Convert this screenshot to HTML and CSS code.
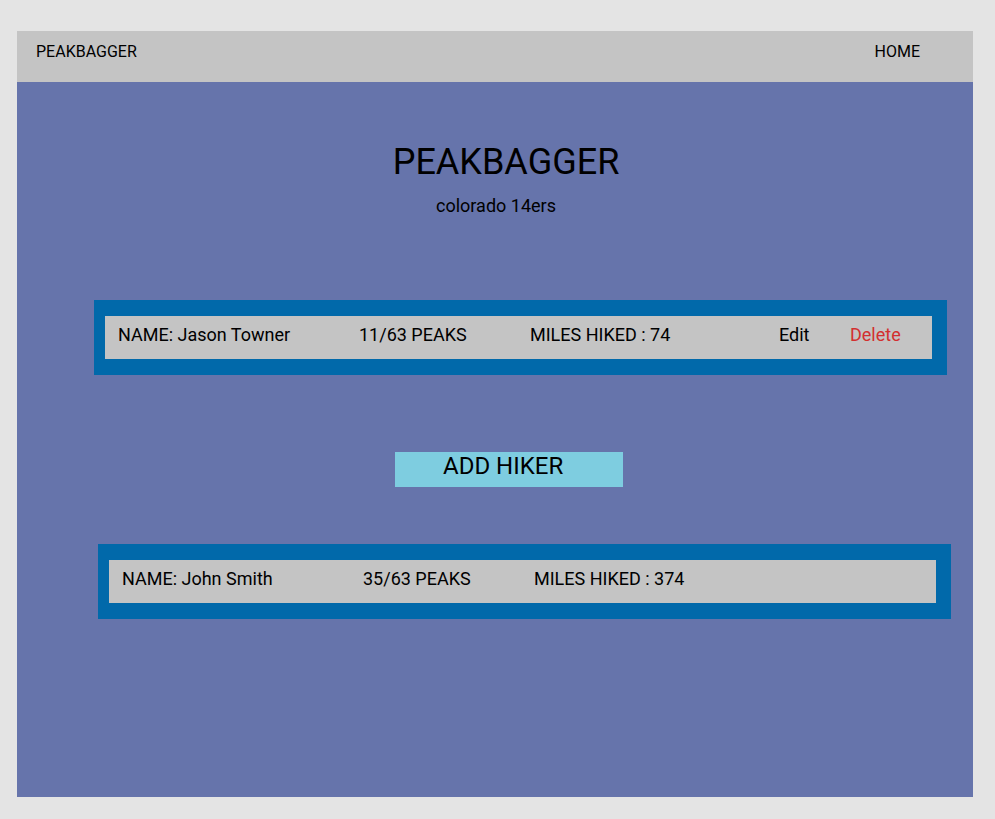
FILE: index.html
```html
<!DOCTYPE html>
<html lang="en">
<head>
<meta charset="utf-8">
<title>Peakbagger</title>
<link rel="stylesheet" href="styles.css">
</head>
<body>
<div class="app">
  <header class="topbar">
    <span class="brand">PEAKBAGGER</span>
    <span class="nav-home">HOME</span>
  </header>
  <main class="main">
    <h1 class="title">PEAKBAGGER</h1>
    <p class="subtitle">colorado 14ers</p>
    <div class="card card-first">
      <div class="card-row">
        <span>NAME: Jason Towner</span>
        <span>11/63 PEAKS</span>
        <span>MILES HIKED : 74</span>
        <span>Edit</span>
        <span class="delete">Delete</span>
      </div>
    </div>
    <button class="add-btn">ADD HIKER</button>
    <div class="card card-second">
      <div class="card-row">
        <span>NAME: John Smith</span>
        <span>35/63 PEAKS</span>
        <span>MILES HIKED : 374</span>
        <span></span>
        <span></span>
      </div>
    </div>
  </main>
</div>
</body>
</html>
```
FILE: styles.css
```css
html, body {
  margin: 0;
  padding: 0;
}
body {
  background: #e4e4e4;
  font-family: Roboto, "Liberation Sans", sans-serif;
  color: #000;
}
.app {
  margin: 31px 0 0 17px;
  width: 956px;
}
.topbar {
  height: 51px;
  box-sizing: border-box;
  background: #c4c4c4;
  display: flex;
  justify-content: space-between;
  align-items: flex-start;
  padding: 11px 53px 0 19px;
  font-size: 16px;
}
.main {
  background: #6674ab;
  height: 715px;
  box-sizing: border-box;
  padding-top: 59px;
  display: flex;
  flex-direction: column;
  align-items: flex-start;
}
.title {
  margin: 0;
  align-self: stretch;
  text-align: center;
  padding-left: 22px;
  font-size: 36px;
  font-weight: 400;
  line-height: 42px;
}
.subtitle {
  margin: 12px 0 0;
  align-self: stretch;
  text-align: center;
  padding-left: 2px;
  font-size: 18px;
  line-height: 21px;
}
.card {
  width: 853px;
  box-sizing: border-box;
  background: #0169aa;
  padding: 16px 15px 16px 11px;
}
.card-first {
  margin: 84px 0 0 77px;
}
.card-second {
  margin: 57px 0 0 81px;
}
.card-row {
  background: #c4c4c4;
  height: 43px;
  box-sizing: border-box;
  padding: 8px 0 0 13px;
  display: grid;
  grid-template-columns: 241px 171px 249px 71px auto;
  font-size: 18px;
  line-height: 21px;
}
.delete {
  color: #d32f2f;
}
.add-btn {
  margin: 77px 0 0 378px;
  width: 228px;
  height: 35px;
  border: none;
  background: #7ecde0;
  font-family: Roboto, "Liberation Sans", sans-serif;
  font-size: 24px;
  line-height: 28px;
  color: #000;
  text-align: left;
  padding: 0 0 7px 48px;
  display: flex;
  align-items: flex-start;
}
```
